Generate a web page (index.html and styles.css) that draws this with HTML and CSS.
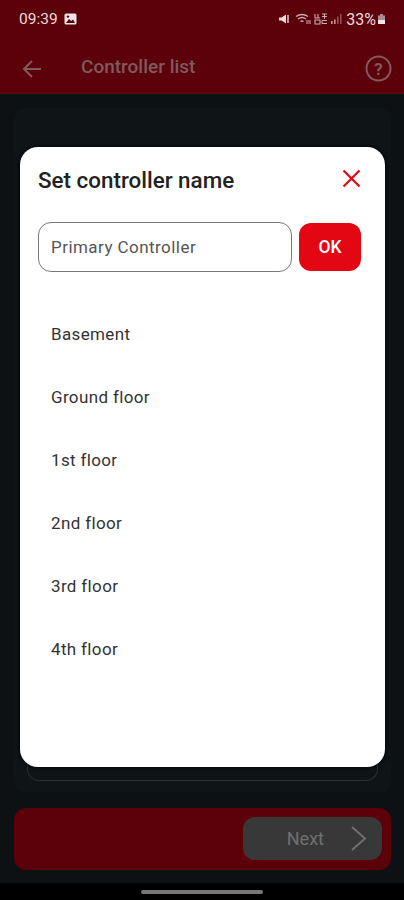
FILE: index.html
```html
<!DOCTYPE html>
<html lang="en">
<head>
    <meta charset="UTF-8">
    <meta name="viewport" content="width=device-width, initial-scale=1.0">
    <title>Controller list</title>
    <link rel="stylesheet" href="styles.css">
</head>
<body>
    <div class="screen">
        <header class="app-header">
            <div class="status-bar">
                <div class="status-left">
                    <span class="clock">09:39</span>
                    <svg class="status-icon" width="13" height="12" viewBox="0 0 13 12">
                        <rect x="0.5" y="0.5" width="12" height="11" rx="1.5" fill="#f0e4e4"/>
                        <path d="M2 10 L5 6 L7 8 L9 6.5 L11 10 Z" fill="#5e000a"/>
                        <circle cx="4" cy="3.6" r="1.2" fill="#5e000a"/>
                    </svg>
                </div>
                <div class="status-right">
                    <svg width="12" height="12" viewBox="0 0 12 12">
                        <path d="M1 4.5 H3.5 L8 1.5 V10.5 L3.5 7.5 H1 Z" fill="#eadada"/>
                        <path d="M10 2 V10" stroke="#eadada" stroke-width="1.4"/>
                    </svg>
                    <svg class="wifi-icon" width="17" height="12" viewBox="0 0 17 12">
                        <path d="M1 3.5 Q7 -0.5 13 3.5 M3 6 Q7 3 11 6 M5.5 8.5 Q7 7.5 8.5 8.5" stroke="#c9aeb1" stroke-width="1.3" fill="none"/>
                        <path d="M11 8 H16 M11 10 H16" stroke="#c9aeb1" stroke-width="1"/>
                    </svg>
                    <svg width="14" height="12" viewBox="0 0 14 12">
                        <path d="M1 1 V5 H6 M4 1 V5 M8 1 H13 M8 3.5 H13 M10.5 1 V6 M1 7 H6 V11 H1 Z M8 7.5 H13 M8 10.5 H13 M8 7.5 V10.5" stroke="#c9aeb1" stroke-width="1.1" fill="none"/>
                    </svg>
                    <svg width="12" height="12" viewBox="0 0 12 12">
                        <rect x="1" y="8" width="1.6" height="3" fill="#b99a9d"/>
                        <rect x="4" y="6.5" width="1.6" height="4.5" fill="#b99a9d"/>
                        <rect x="7" y="3.5" width="1.6" height="7.5" fill="#8a5056"/>
                        <rect x="10" y="1" width="1.6" height="10" fill="#8a5056"/>
                    </svg>
                    <span class="battery-text">33%</span>
                    <svg width="9" height="12" viewBox="0 0 9 12">
                        <path d="M3 1 H6 V2.5 H8 V11 H1 V2.5 H3 Z" fill="#a98a8d"/>
                        <rect x="1" y="7" width="7" height="4" fill="#f0e4e4"/>
                    </svg>
                </div>
            </div>
            <div class="toolbar">
                <svg class="back-icon" width="20" height="18" viewBox="0 0 20 18">
                    <path d="M19 9 H2 M10 1 L2 9 L10 17" stroke="#7f5a5e" stroke-width="2" fill="none"/>
                </svg>
                <h1 class="toolbar-title">Controller list</h1>
                <svg class="help-icon" width="27" height="27" viewBox="0 0 27 27">
                    <circle cx="13.5" cy="13.5" r="12" stroke="#7f5a5e" stroke-width="2" fill="none"/>
                    <text x="13.5" y="19.5" text-anchor="middle" class="help-mark">?</text>
                </svg>
            </div>
        </header>

        <main class="content">
            <div class="list-panel">
                <div class="list-card"></div>
            </div>
            <div class="footer-bar">
                <button class="next-btn">
                    <span>Next</span>
                    <svg width="17" height="25" viewBox="0 0 17 25">
                        <path d="M2 1 L15 12.5 L2 24" stroke="#6f6f6f" stroke-width="2" fill="none"/>
                    </svg>
                </button>
            </div>
        </main>

        <div class="nav-strip">
            <div class="home-pill"></div>
        </div>

        <div class="modal">
            <div class="modal-head">
                <h2>Set controller name</h2>
                <svg class="close-icon" width="19" height="19" viewBox="0 0 19 19">
                    <path d="M1.5 1.5 L17.5 17.5 M17.5 1.5 L1.5 17.5" stroke="#e30613" stroke-width="2.2" fill="none"/>
                </svg>
            </div>
            <div class="name-row">
                <div class="name-input">Primary Controller</div>
                <button class="ok-btn">OK</button>
            </div>
            <ul class="floor-list">
                <li>Basement</li>
                <li>Ground floor</li>
                <li>1st floor</li>
                <li>2nd floor</li>
                <li>3rd floor</li>
                <li>4th floor</li>
            </ul>
        </div>
    </div>
</body>
</html>
```

FILE: styles.css
```css
:root {
    --header: #5c0009;
    --background: #0d1114;
    --red: #e30613;
    --text: #333;
}

* {
    box-sizing: border-box;
}

body {
    margin: 0;
    background: #000;
    font-family: Roboto, 'Noto Sans', sans-serif;
}

.screen {
    position: relative;
    width: 404px;
    height: 900px;
    display: flex;
    flex-direction: column;
    overflow: hidden;
}

.app-header {
    height: 94px;
    background: var(--header);
    padding: 10px 18px 0 19px;
}

.status-bar {
    display: flex;
    justify-content: space-between;
    align-items: center;
    height: 18px;
}

.status-left,
.status-right {
    display: flex;
    align-items: center;
}

.status-left {
    gap: 6px;
}

.status-right {
    gap: 2px;
}

.wifi-icon {
    margin-left: 3px;
}

.clock {
    font-size: 15.5px;
    color: #eadcdc;
}

.battery-text {
    font-size: 16px;
    color: #eadcdc;
    margin-left: 2px;
}

.status-right svg:last-child {
    margin-left: -1px;
}

.toolbar {
    display: flex;
    align-items: center;
    height: 27px;
    margin-top: 25px;
}

.back-icon {
    margin: 4px 0 0 3px;
}

.toolbar-title {
    flex: 1;
    margin: 0 0 0 39px;
    font-size: 19px;
    font-weight: 500;
    color: #7f5a5e;
}

.help-icon {
    margin: 4px -6px 0 0;
}

.help-mark {
    font-family: Roboto, sans-serif;
    font-size: 17px;
    font-weight: 700;
    fill: #7f5a5e;
}

.content {
    flex: 1;
    background: var(--background);
    padding: 14px 13px 13px 14px;
    display: flex;
    flex-direction: column;
}

.list-panel {
    height: 684px;
    margin-bottom: 16px;
    padding: 50px 13px 0;
    background: #0f1417;
    border-radius: 10px;
}

.list-card {
    height: 623px;
    border: 1px solid #2a2f33;
    border-top: none;
    border-radius: 0 0 12px 12px;
}

.footer-bar {
    height: 62px;
    background: var(--header);
    border-radius: 12px;
    display: flex;
    justify-content: flex-end;
    align-items: center;
    padding: 0 9px 1px 0;
}

.next-btn {
    width: 139px;
    height: 43px;
    border: none;
    border-radius: 12px;
    background: #383838;
    color: #707070;
    font-family: Roboto, sans-serif;
    font-size: 18px;
    display: flex;
    align-items: center;
    justify-content: flex-end;
    gap: 26px;
    padding: 0 15px 0 0;
}

.nav-strip {
    height: 17px;
    background: #000;
    display: flex;
    justify-content: center;
    padding-top: 7px;
}

.home-pill {
    width: 122px;
    height: 4px;
    border-radius: 2px;
    background: #777;
}

.modal {
    position: absolute;
    left: 20px;
    top: 147px;
    width: 365px;
    height: 620px;
    background: #fff;
    border-radius: 18px;
    padding: 0 24px 0 18px;
    box-shadow: 0 0 5px #000;
}

.modal-head {
    display: flex;
    justify-content: space-between;
    align-items: center;
    height: 66px;
}

.modal-head h2 {
    margin: 0;
    font-size: 22.4px;
    font-weight: 500;
    color: #222;
}

.close-icon {
    margin-top: -3px;
}

.name-row {
    display: flex;
    align-items: center;
    gap: 7px;
    margin-top: 9px;
}

.name-input {
    width: 255px;
    height: 50px;
    border: 1px solid #777;
    border-radius: 13px;
    padding: 0 12px;
    display: flex;
    align-items: center;
    font-size: 17px;
    letter-spacing: 0.45px;
    color: #555;
}

.ok-btn {
    width: 62px;
    height: 48px;
    border: none;
    border-radius: 12px;
    background: var(--red);
    color: #fff;
    font-family: Roboto, sans-serif;
    font-size: 17.5px;
    font-weight: 500;
}

.floor-list {
    list-style: none;
    margin: 31px 0 0;
    padding: 0 0 0 13px;
}

.floor-list li {
    height: 63px;
    line-height: 63px;
    font-size: 17px;
    letter-spacing: 0.35px;
    color: var(--text);
}
```
